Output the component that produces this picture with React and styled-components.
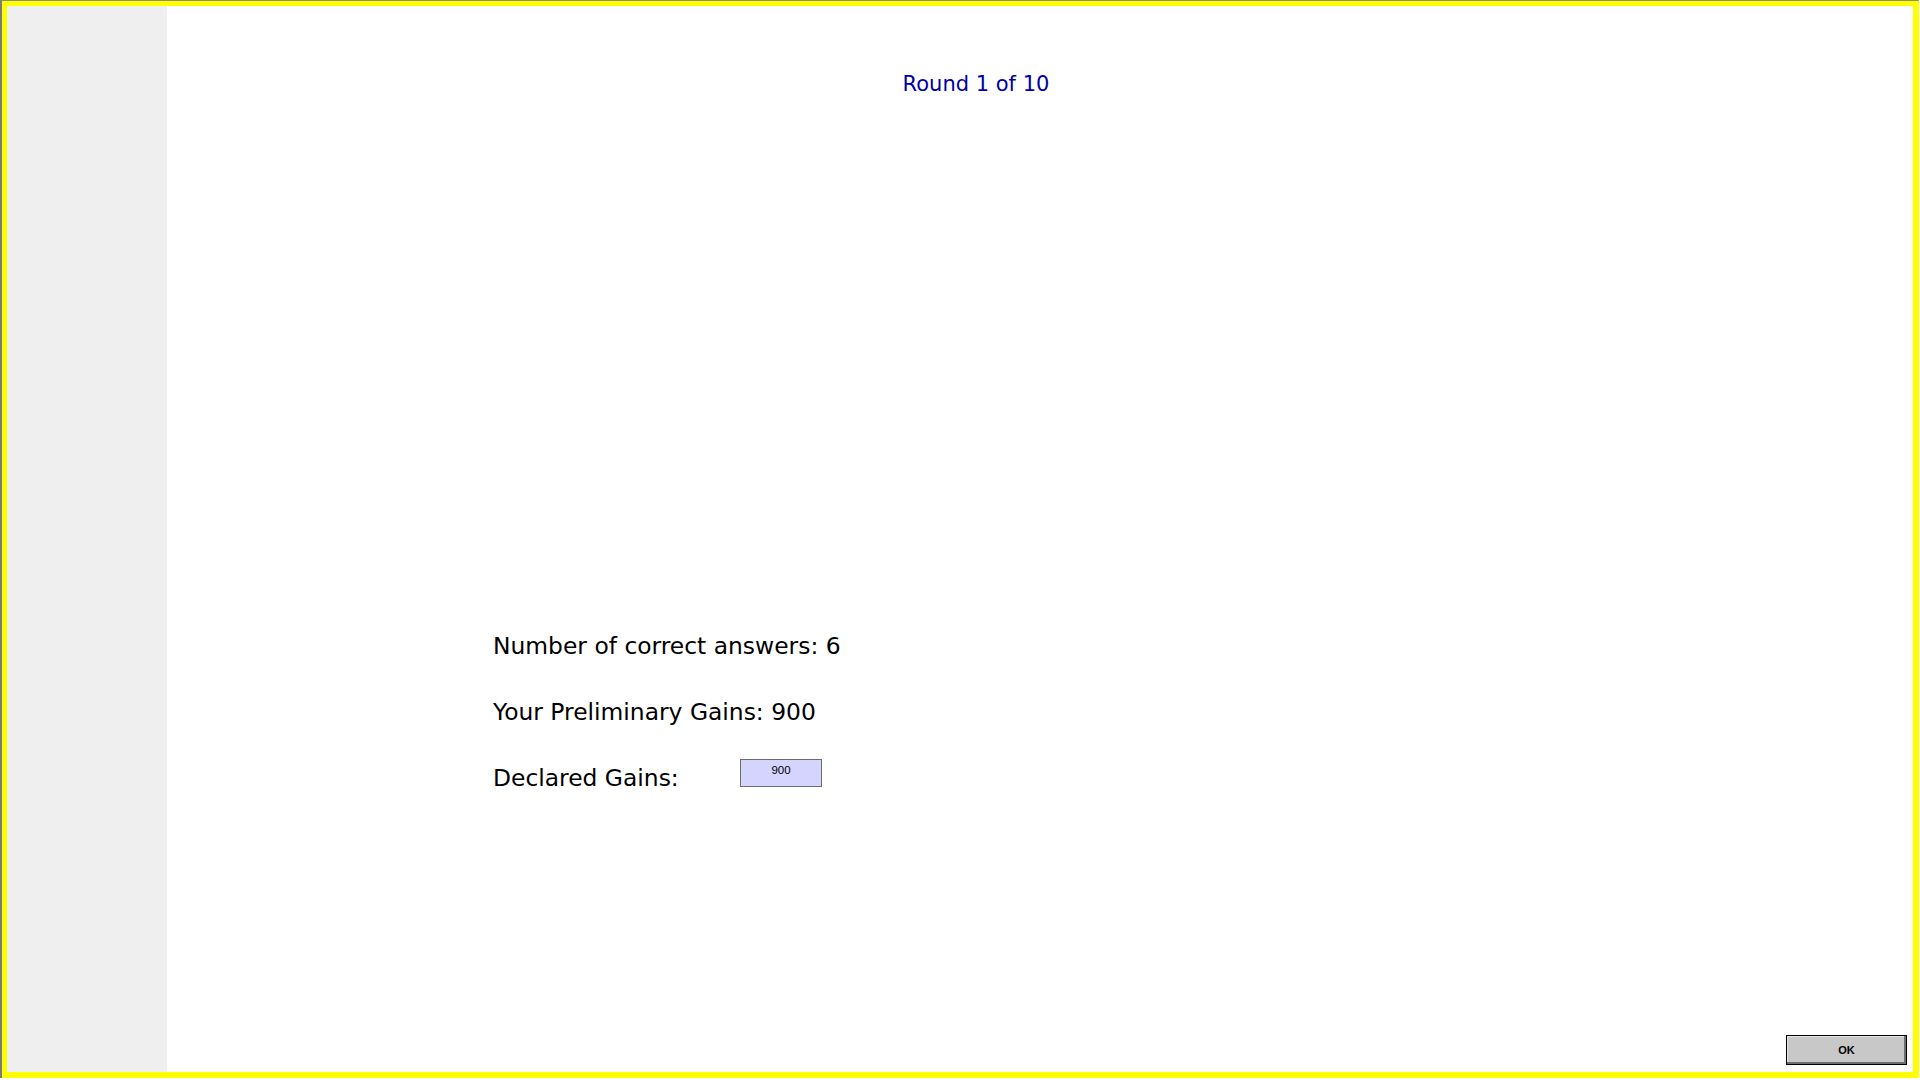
import React from "react";
import styled, { createGlobalStyle } from "styled-components";

const Global = createGlobalStyle`
  html, body { margin: 0; padding: 0; background: #ffffff; }
  body { width: 1920px; height: 1080px; overflow: hidden; }
  * { box-sizing: border-box; }
`;

const Screen = styled.div`
  width: 1920px;
  height: 1080px;
  display: flex;
  padding: 0 1px 2px 0;
  background: #ffffff;
`;

const Edge = styled.div`
  flex: 1;
  display: flex;
  border-top: 1px solid #8c8c8c;
  border-left: 2px solid #7a7a7a;
`;

const Frame = styled.div`
  flex: 1;
  display: flex;
  border-style: solid;
  border-color: #ffff00;
  border-width: 5px 6px 6px 5px;
  background: #ffffff;
`;

const Sidebar = styled.aside`
  width: 160px;
  flex: 0 0 160px;
  background: #efefef;
`;

const Main = styled.main`
  flex: 1;
  display: flex;
  flex-direction: column;
  padding-left: 326px;
  font-family: "DejaVu Sans", Tahoma, sans-serif;
`;

const Content = styled.div`
  width: 966px;
  display: flex;
  flex-direction: column;
`;

const Title = styled.h1`
  margin: 66px 0 0;
  font-size: 21px;
  line-height: 24px;
  font-weight: normal;
  color: #0000a8;
  text-align: center;
`;

const Fields = styled.div`
  margin-top: 538px;
  display: flex;
  flex-direction: column;
  gap: 42px;
`;

const Row = styled.div`
  display: flex;
  align-items: flex-end;
  height: 24px;
`;

const Label = styled.span`
  width: ${(p) => (p.$w ? `${p.$w}px` : "auto")};
  font-size: 23.4px;
  line-height: 24px;
  color: #000000;
  white-space: nowrap;
`;

const GainsInput = styled.div`
  width: 82px;
  height: 28px;
  margin-bottom: 3px;
  border: 1px solid #6b6b6b;
  background: #d4d4ff;
  font-family: "Liberation Sans", Arial, sans-serif;
  font-size: 11.5px;
  line-height: 12px;
  padding-top: 4px;
  text-align: center;
  color: #000000;
`;

const Footer = styled.div`
  margin-top: auto;
  display: flex;
  justify-content: flex-end;
  padding: 0 6px 7px 0;
`;

const OkButton = styled.button`
  width: 121px;
  height: 30px;
  padding: 0;
  background: #c8c8c8;
  border: 1px solid #000000;
  box-shadow: inset -2px -2px 0 #6e6e6e, inset 1px 1px 0 #e6e6e6;
  font-family: "Liberation Sans", Arial, sans-serif;
  font-size: 11px;
  font-weight: bold;
  color: #000000;
`;

export default function App() {
  return (
    <>
      <Global />
      <Screen>
        <Edge>
          <Frame>
            <Sidebar />
            <Main>
              <Content>
                <Title>Round 1 of 10</Title>
                <Fields>
                  <Row>
                    <Label>Number of correct answers: 6</Label>
                  </Row>
                  <Row>
                    <Label>Your Preliminary Gains: 900</Label>
                  </Row>
                  <Row>
                    <Label $w={247}>Declared Gains:</Label>
                    <GainsInput>900</GainsInput>
                  </Row>
                </Fields>
              </Content>
              <Footer>
                <OkButton>OK</OkButton>
              </Footer>
            </Main>
          </Frame>
        </Edge>
      </Screen>
    </>
  );
}
